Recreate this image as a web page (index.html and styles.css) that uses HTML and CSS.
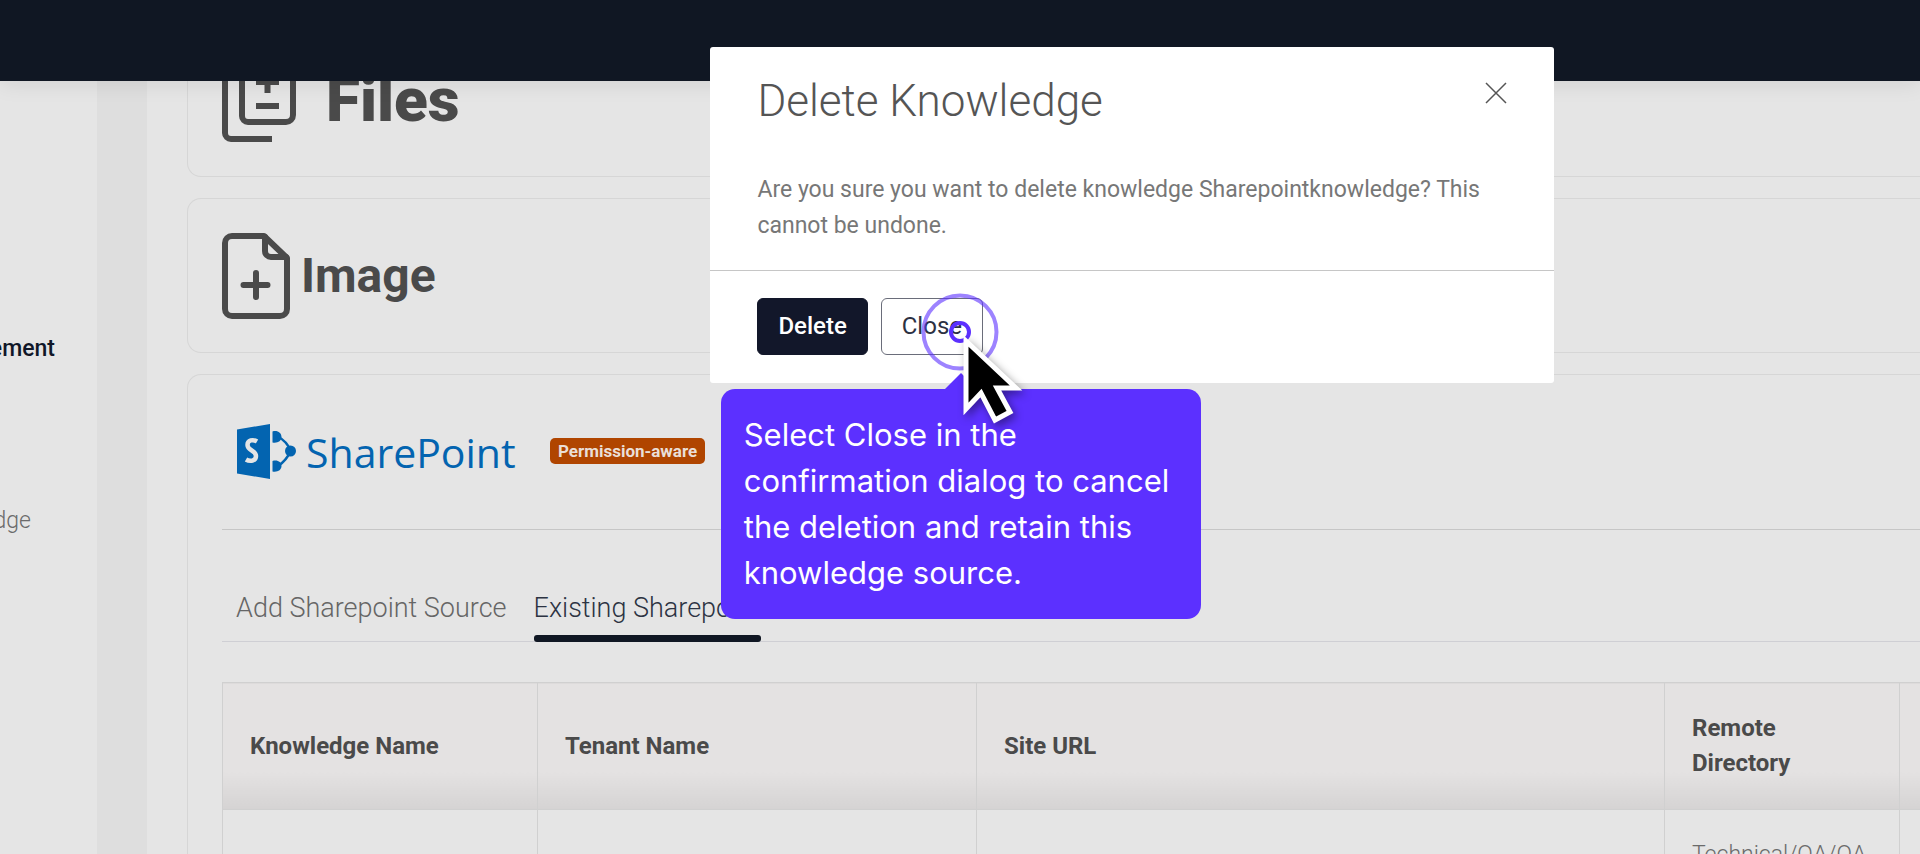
FILE: index.html
```html
<!DOCTYPE html>
<html lang="en">
<head>
  <meta charset="UTF-8" />
  <meta name="viewport" content="width=device-width, initial-scale=1.0"/>
  <title>Delete Knowledge</title>
  <link rel="stylesheet" href="styles.css">
</head>
<body>
  <header class="topbar"></header>

  <div class="page">
    <nav class="sidebar">
      <a href="#" class="active">Management</a>
      <a href="#">Knowledge</a>
    </nav>

    <main class="content">
      <section class="card">
        <h2 class="files">
          <svg width="76" height="86" viewBox="0 0 76 86" fill="none" stroke="currentColor" stroke-width="6">
            <path d="M3 15v61a6 6 0 0 0 6 6h41"/>
            <path d="M26 2h27l18 18v38a7 7 0 0 1-7 7H26a6 6 0 0 1-6-6V8a6 6 0 0 1 6-6z"/>
            <path d="M45.500 14v22M34 25h23M34 49h23"/>
          </svg>
          Files
        </h2>
      </section>

      <section class="card">
        <h2>
          <svg width="68" height="86" viewBox="0 0 68 86" fill="none" stroke="currentColor" stroke-width="6" stroke-linejoin="round" stroke-linecap="round">
            <path d="M42 3H10a7 7 0 0 0-7 7v66a7 7 0 0 0 7 7h48a7 7 0 0 0 7-7V25z"/>
            <path d="M43 4v14a6 6 0 0 0 6 6h15M34 40v24M21.500 52h24"/>
          </svg>
          Image
        </h2>
      </section>

      <section class="card sharepoint">
        <div class="source">
          <svg class="logo" width="280" height="56" viewBox="0 0 280 56" fill="#0364b0">
            <path d="M1 6.500L34 1v55L1 50.500z"/>
            <path d="M21 18.500c-4-2.500-9.500-1.500-9.500 3.500 0 6 8.500 5 8.500 11 0 5-6 6-10 3.500" fill="none" stroke="#e5e5e5" stroke-width="4.500"/>
            <path d="M36.500 8.500c5-1.500 9 1.500 9 5.500s-4 6.500-9 5.500zM36.500 38c5-1.500 9 1 9 5s-4 6.500-9 5.500z"/>
            <circle cx="54.500" cy="28" r="5.500"/>
            <path d="M41 13q11 6 13.500 15Q51 37 41 44" fill="none" stroke="#0364b0" stroke-width="2.500"/>
            <text x="70" y="45">SharePoint</text>
          </svg>
          <span class="badge">Permission-aware</span>
        </div>

        <div class="tabs">
          <button class="tab">Add Sharepoint Source</button>
          <button class="tab selected">Existing Sharepoint</button>
        </div>

        <table>
          <colgroup>
            <col class="col-name"><col class="col-tenant"><col class="col-url"><col class="col-dir"><col>
          </colgroup>
          <thead>
            <tr>
              <th>Knowledge Name</th>
              <th>Tenant Name</th>
              <th>Site URL</th>
              <th>Remote Directory</th>
              <th></th>
            </tr>
          </thead>
          <tbody>
            <tr>
              <td></td>
              <td></td>
              <td></td>
              <td>Technical/QA/QA</td>
              <td></td>
            </tr>
          </tbody>
        </table>
      </section>
    </main>
  </div>

  <div class="modal" role="dialog" aria-labelledby="modal-title">
    <div class="modal-header">
      <h1 id="modal-title">Delete Knowledge</h1>
      <button class="dismiss" aria-label="Close dialog">
        <svg width="22" height="22" viewBox="0 0 22 22" fill="none" stroke="#555" stroke-width="1.500">
          <path d="M1 1l20 20M21 1L1 21"/>
        </svg>
      </button>
    </div>
    <p>Are you sure you want to delete knowledge Sharepointknowledge? This cannot be undone.</p>
    <div class="modal-footer">
      <button class="btn btn-dark">Delete</button>
      <div class="target">
        <button class="btn">Close</button>
        <div class="tooltip">Select Close in the confirmation dialog to cancel the deletion and retain this knowledge source.</div>
        <svg class="pointer" width="120" height="140" viewBox="0 0 120 140">
          <circle cx="40" cy="40" r="36.500" fill="none" stroke="#5c30ff" stroke-opacity=".6" stroke-width="4"/>
          <circle cx="40" cy="40" r="9" fill="none" stroke="#5c30ff" stroke-width="4"/>
          <path class="arrow" d="M46 49V117L61 101 75 128 90 120 77 96H96z"/>
        </svg>
      </div>
    </div>
  </div>
</body>
</html>
```
FILE: styles.css
```css
* {
  box-sizing: border-box;
}

body {
  margin: 0;
  height: 100vh;
  overflow: hidden;
  background-color: #e5e5e5;
  color: #4a4a4a;
  font-family: Roboto, sans-serif;
  font-size: 23px;
  font-weight: 300;
  line-height: 35px;
}

button {
  font: inherit;
  color: inherit;
  background: none;
  border: none;
  padding: 0;
  cursor: pointer;
}

.topbar {
  position: fixed;
  top: 0;
  left: 0;
  right: 0;
  height: 81px;
  z-index: 1;
  background-color: #101723;
  box-shadow: 0 1px 22px rgba(0, 0, 0, 0.1);
}

.page {
  display: flex;
  height: 100vh;
  overflow: hidden;
}

.sidebar {
  flex: 0 0 147px;
  display: flex;
  flex-direction: column;
  align-items: flex-end;
  gap: 137px;
  padding: 331px 42px 0 0;
  border-right: 50px solid #dedede;
  overflow: hidden;
}

.sidebar a {
  color: #6b6b6b;
  text-decoration: none;
}

.sidebar .active {
  color: #101728;
  font-weight: 500;
}

.sidebar a:last-child {
  margin-right: 24px;
}

.content {
  flex: 1;
  min-width: 0;
  display: flex;
  flex-direction: column;
  gap: 21px;
  padding: 22px 0 0 40px;
}

.card {
  flex-shrink: 0;
  padding: 34px 0 33px 34px;
  border: 1px solid #d6d6d6;
  border-right: none;
  border-radius: 14px 0 0 14px;
}

h2 {
  display: flex;
  align-items: center;
  gap: 11px;
  margin: 0;
  font-size: 48px;
  font-weight: 700;
  line-height: 86px;
}

.files {
  gap: 28px;
  font-size: 62px;
  font-weight: 900;
}

.source {
  display: flex;
  align-items: center;
  gap: 34px;
  padding: 14px 0 50px 14px;
  border-bottom: 1px solid #c6c6c6;
}

.logo text {
  font-family: "Open Sans", sans-serif;
  font-size: 41px;
  font-weight: 400;
}

.badge {
  padding: 0 8px;
  border-radius: 5px;
  background-color: #b04500;
  color: #eadfd8;
  font-size: 17px;
  font-weight: 700;
  line-height: 26px;
}

.tabs {
  display: flex;
  gap: 27px;
  margin-top: 52px;
  padding-left: 14px;
  border-bottom: 1px solid #cfcfd4;
}

.tab {
  padding: 9px 0 15px;
  color: #666;
  font-size: 27px;
}

.tab.selected {
  position: relative;
  color: #2c3342;
}

.tab.selected::after {
  content: "";
  position: absolute;
  left: 0;
  right: 0;
  bottom: -1px;
  height: 7px;
  border-radius: 3px;
  background-color: #101723;
}

table {
  width: 100%;
  margin-top: 40px;
  table-layout: fixed;
  border-collapse: collapse;
}

.col-name {
  width: 315px;
}

.col-tenant {
  width: 439px;
}

.col-url {
  width: 688px;
}

.col-dir {
  width: 235px;
}

th, td {
  padding: 27px;
  border: 1px solid #d0d0d0;
  text-align: left;
}

th {
  padding: 28px 27px;
  background: linear-gradient(#e4e2e2 70%, #d5d3d3);
  font-size: 24px;
  font-weight: 700;
}

td {
  color: #6b6b6b;
}

th:last-child, td:last-child {
  border-right: none;
}

.modal {
  position: absolute;
  top: 47px;
  left: 37%;
  width: 844px;
  z-index: 2;
  border-radius: 3px;
  background-color: #fff;
}

.modal-header {
  display: flex;
  justify-content: space-between;
  align-items: flex-start;
  padding: 25px 47px 0;
}

h1 {
  margin: 0;
  color: #555;
  font-size: 44px;
  font-weight: 300;
  line-height: 58px;
}

.dismiss {
  padding-top: 10px;
  line-height: 0;
}

.modal p {
  margin: 0;
  padding: 42px 47px 26px;
  color: #777;
  font-weight: 400;
  line-height: 36px;
}

.modal-footer {
  display: flex;
  gap: 13px;
  padding: 27px 47px 28px;
  border-top: 1px solid #c6c6c6;
}

.btn {
  display: block;
  padding: 10px 20px;
  border: 1px solid #6a6d7a;
  border-radius: 6px;
  color: #2c3142;
  font-size: 24px;
  font-weight: 400;
}

.btn-dark {
  background-color: #12172a;
  border-color: #12172a;
  color: #fff;
  font-weight: 500;
}

.target {
  position: relative;
}

.tooltip {
  position: absolute;
  top: 91px;
  left: -160px;
  width: 480px;
  padding: 23px;
  border-radius: 14px;
  background-color: #5c30ff;
  color: #fff;
  font-family: Inter, sans-serif;
  font-size: 31px;
  font-weight: 400;
  line-height: 46px;
}

.tooltip::before {
  content: "";
  position: absolute;
  top: -16px;
  left: 223px;
  border: 17px solid transparent;
  border-top: none;
  border-bottom-color: #5c30ff;
}

.pointer {
  position: absolute;
  top: -6px;
  left: 39px;
  pointer-events: none;
}

.arrow {
  fill: #000;
  stroke: #fff;
  stroke-width: 5;
  filter: drop-shadow(3px 4px 4px rgba(0, 0, 0, 0.4));
}
```
